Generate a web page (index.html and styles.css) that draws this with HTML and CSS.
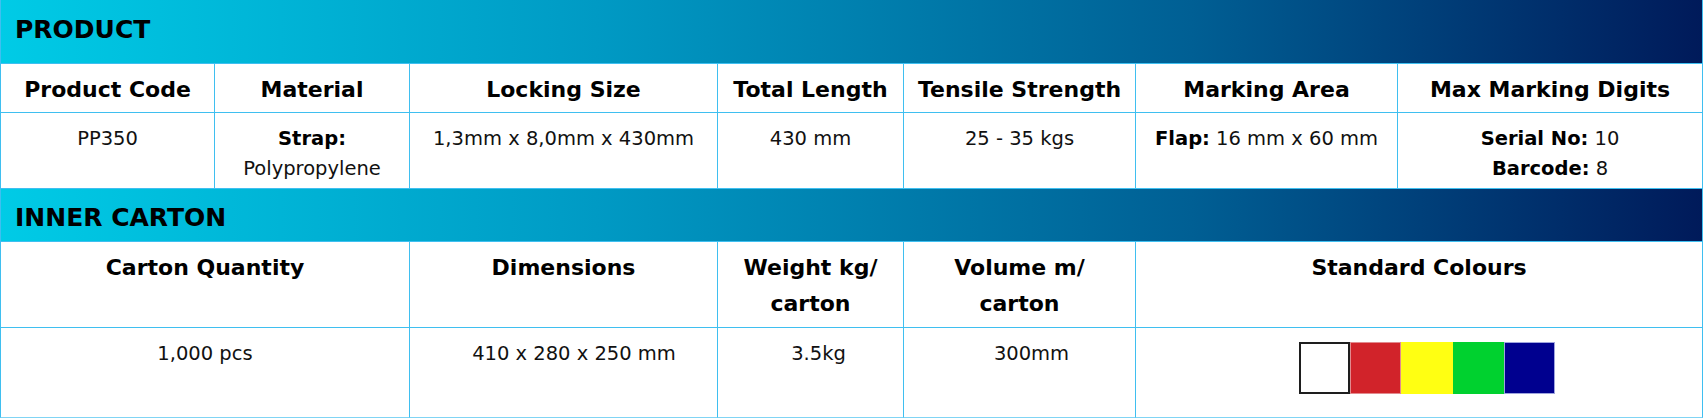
FILE: index.html
```html
<!DOCTYPE html>
<html lang="en">
<head>
<meta charset="utf-8">
<title>Product specification</title>
<link rel="stylesheet" href="styles.css">
</head>
<body>
<table class="spec">
  <colgroup>
    <col class="c1"><col class="c2"><col class="c3"><col class="c4"><col class="c5"><col class="c6"><col class="c7">
  </colgroup>
  <tr class="band band-1"><td colspan="7">PRODUCT</td></tr>
  <tr class="head head-1">
    <th>Product Code</th>
    <th>Material</th>
    <th>Locking Size</th>
    <th>Total Length</th>
    <th>Tensile Strength</th>
    <th>Marking Area</th>
    <th>Max Marking Digits</th>
  </tr>
  <tr class="data data-1">
    <td>PP350</td>
    <td><b>Strap:</b><br>Polypropylene</td>
    <td>1,3mm x 8,0mm x 430mm</td>
    <td>430 mm</td>
    <td>25 - 35 kgs</td>
    <td><b>Flap:</b> 16 mm x 60 mm</td>
    <td><b>Serial No:</b> 10<br><b>Barcode:</b> 8</td>
  </tr>
  <tr class="band band-2"><td colspan="7">INNER CARTON</td></tr>
  <tr class="head head-2">
    <th colspan="2">Carton Quantity</th>
    <th>Dimensions</th>
    <th>Weight kg/<br>carton</th>
    <th>Volume m/<br>carton</th>
    <th colspan="2">Standard Colours</th>
  </tr>
  <tr class="data data-2">
    <td colspan="2">1,000 pcs</td>
    <td class="shift-21">410 x 280 x 250 mm</td>
    <td class="shift-16">3.5kg</td>
    <td class="shift-24">300mm</td>
    <td colspan="2" class="shift-16">
      <div class="swatches">
        <span class="swatch sw-white"></span>
        <span class="swatch sw-red"></span>
        <span class="swatch sw-yellow"></span>
        <span class="swatch sw-green"></span>
        <span class="swatch sw-navy"></span>
      </div>
    </td>
  </tr>
</table>
</body>
</html>
```
FILE: styles.css
```css
html, body {
  margin: 0;
  padding: 0;
  background: #ffffff;
}

body {
  font-family: "DejaVu Sans", "Liberation Sans", sans-serif;
  color: #111111;
}

.spec {
  border-collapse: separate;
  border-spacing: 0;
  table-layout: fixed;
  width: 1703px;
}

.c1 { width: 215px; }
.c2 { width: 195px; }
.c3 { width: 308px; }
.c4 { width: 186px; }
.c5 { width: 232px; }
.c6 { width: 262px; }
.c7 { width: 305px; }

.spec td,
.spec th {
  box-sizing: border-box;
  padding: 0;
  text-align: center;
  vertical-align: top;
  border-right: 1px solid #3fbff0;
  border-bottom: 1px solid #3fbff0;
}

.spec tr > :first-child {
  border-left: 1px solid #3fbff0;
}

.band td {
  background: linear-gradient(90deg, #00cbe6 0%, #009ac4 35%, #005f94 70%, #001a5a 100%);
  text-align: left;
  font-size: 25px;
  font-weight: 700;
  line-height: 30px;
  color: #000000;
  padding: 14px 0 0 14px;
}

.band-1 { height: 64px; }
.band-1 td { padding-top: 15px; }
.band-2 { height: 53px; }

.head th {
  font-size: 22px;
  font-weight: 700;
  line-height: 36px;
  padding-top: 8px;
  color: #000000;
}

.head-1 { height: 49px; }
.head-2 { height: 86px; }

.data td {
  font-size: 19.5px;
  line-height: 29.5px;
  padding-top: 11px;
  color: #111111;
}

.data b {
  font-weight: 700;
  color: #000000;
}

.data-1 { height: 76px; }
.data-2 { height: 90px; }

.data-2 td {
  border-bottom-color: #80d4f4;
}

.data td.shift-16 { padding-left: 16px; }
.data td.shift-21 { padding-left: 21px; }
.data td.shift-24 { padding-left: 24px; }

.swatches {
  display: flex;
  justify-content: center;
  margin-top: 3px;
}

.swatch {
  display: block;
  box-sizing: border-box;
  width: 51.2px;
  height: 52px;
}

.sw-white  { background: #ffffff; border: 2px solid #1e1e1e; }
.sw-red    { background: #d1232a; border: 1px solid #e28a8e; }
.sw-yellow { background: #ffff12; }
.sw-green  { background: #00d12f; }
.sw-navy   { background: #00008f; border: 1px solid #9ea4de; }
```
